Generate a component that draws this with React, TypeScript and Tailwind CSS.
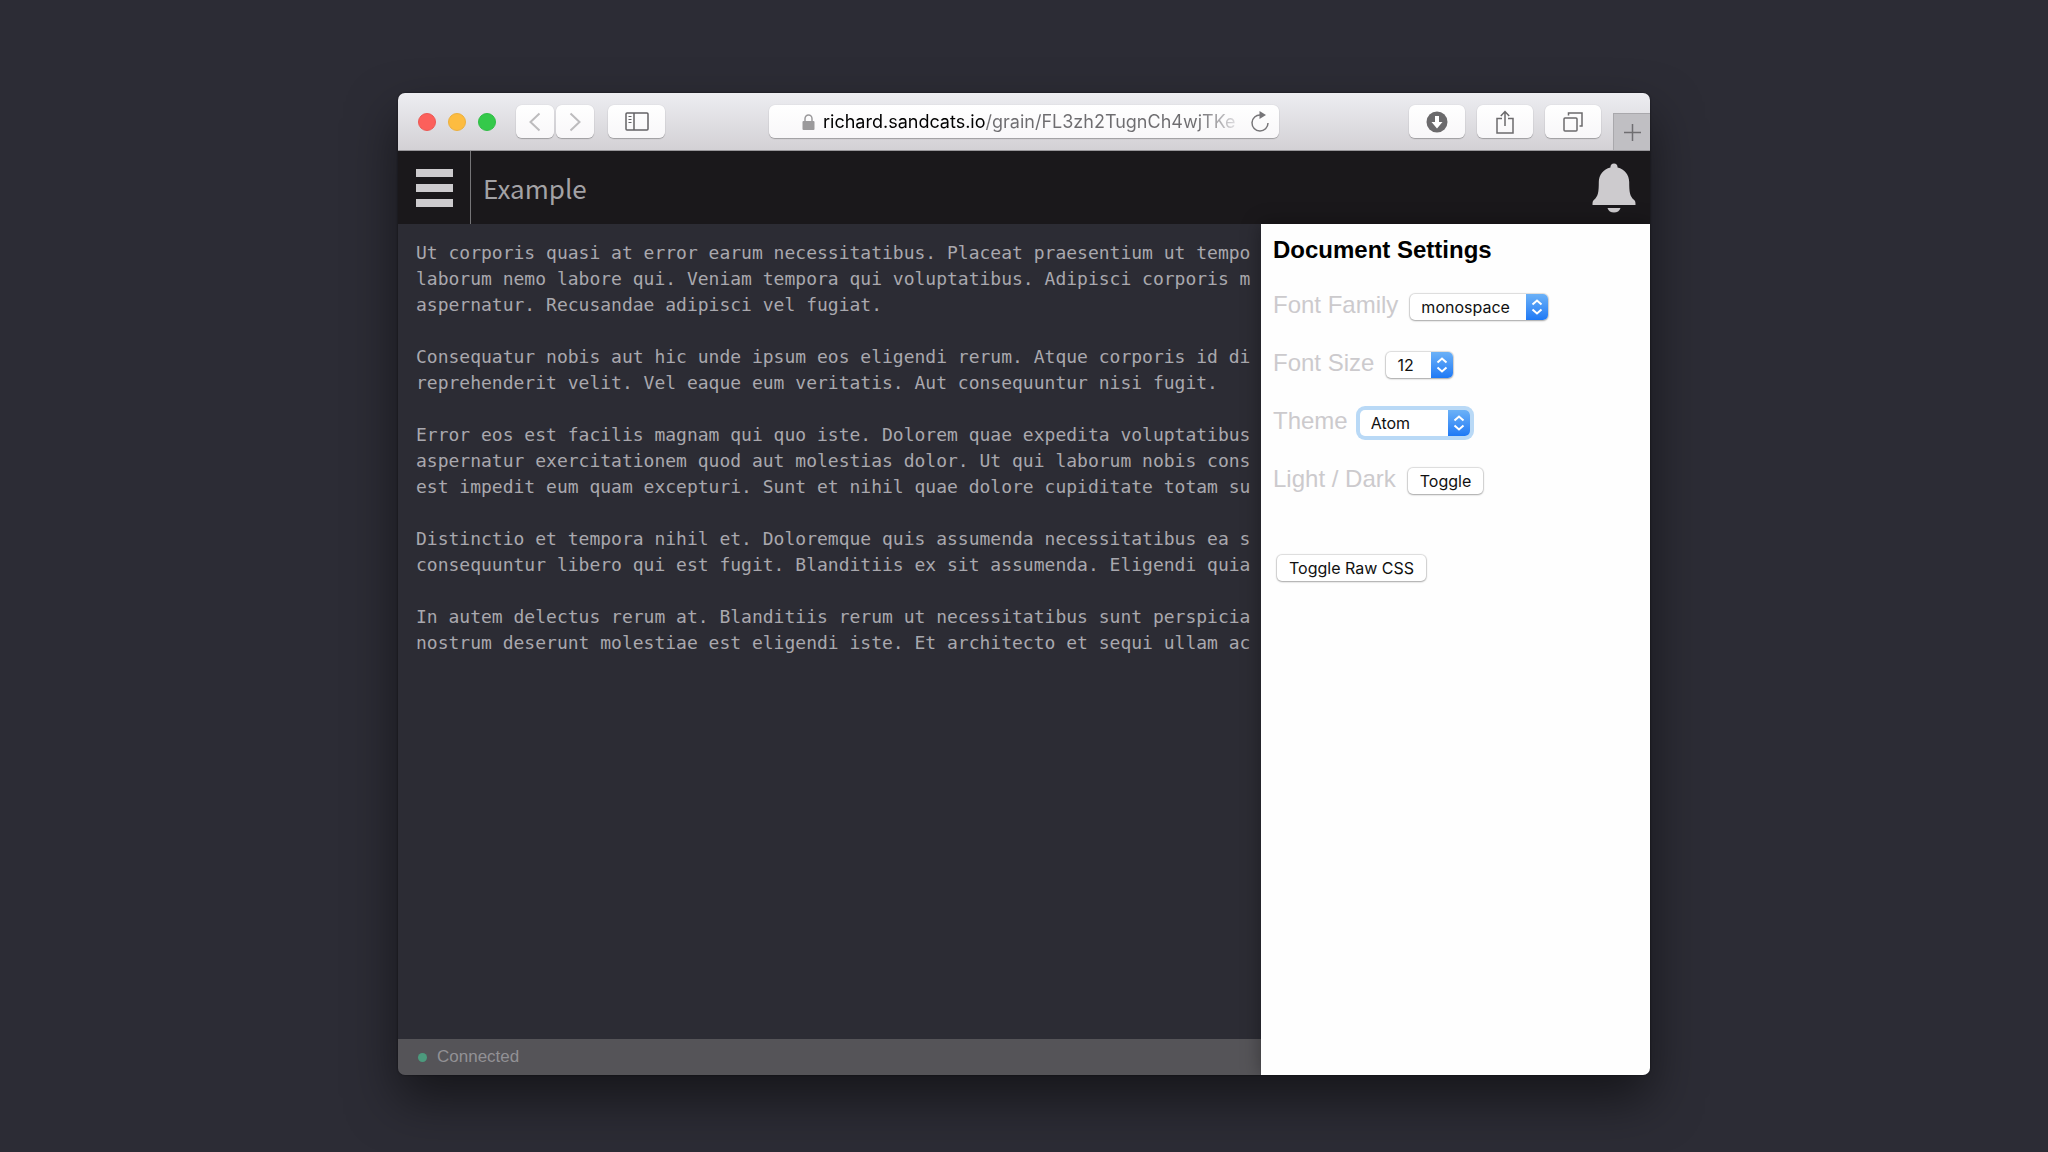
import { useState } from "react";
import type { ReactNode } from "react";

const DOCUMENT_TEXT = `Ut corporis quasi at error earum necessitatibus. Placeat praesentium ut tempo
laborum nemo labore qui. Veniam tempora qui voluptatibus. Adipisci corporis m
aspernatur. Recusandae adipisci vel fugiat.

Consequatur nobis aut hic unde ipsum eos eligendi rerum. Atque corporis id di
reprehenderit velit. Vel eaque eum veritatis. Aut consequuntur nisi fugit.

Error eos est facilis magnam qui quo iste. Dolorem quae expedita voluptatibus
aspernatur exercitationem quod aut molestias dolor. Ut qui laborum nobis cons
est impedit eum quam excepturi. Sunt et nihil quae dolore cupiditate totam su

Distinctio et tempora nihil et. Doloremque quis assumenda necessitatibus ea s
consequuntur libero qui est fugit. Blanditiis ex sit assumenda. Eligendi quia

In autem delectus rerum at. Blanditiis rerum ut necessitatibus sunt perspicia
nostrum deserunt molestiae est eligendi iste. Et architecto et sequi ullam ac`;

const toolButton =
  "flex h-[33px] items-center justify-center rounded-[6px] bg-linear-to-b from-white to-[#f8f7f9] shadow-[0_0_1px_rgba(0,0,0,0.2),0_1px_1px_rgba(0,0,0,0.25)]";

const controlBorder = "shadow-[0_0_1px_1px_rgba(0,0,0,0.13),0_1px_2px_rgba(0,0,0,0.25)]";

const pushButton = `h-[26px] rounded-[5px] bg-white px-3 font-['Inter',sans-serif] text-base leading-[26px] text-[#111111] ${controlBorder}`;

function Toolbar() {
  return (
    <div className="grid h-[58px] grid-cols-[371px_minmax(0,1fr)_371px] border-b border-[#98969a] bg-linear-to-b from-[#ededf1] to-[#d3d1d5]">
      <div className="flex items-center pl-5">
        <div className="mr-5 flex gap-3">
          <button aria-label="Close" className="size-[18px] rounded-full border border-[#ec5853] bg-[#fc605b]" />
          <button aria-label="Minimize" className="size-[18px] rounded-full border border-[#ecb03d] bg-[#fdbc40]" />
          <button aria-label="Zoom" className="size-[18px] rounded-full border border-[#2fbd45] bg-[#34c94a]" />
        </div>
        <div className="mr-[14px] flex gap-[2px]">
          <button aria-label="Back" className={`${toolButton} w-[38px]`}>
            <svg width="12" height="20" viewBox="0 0 12 20" fill="none" stroke="#bdbcbe" strokeWidth="2">
              <path d="M10.5 1.5 1.5 10l9 8.5" />
            </svg>
          </button>
          <button aria-label="Forward" className={`${toolButton} w-[38px]`}>
            <svg width="12" height="20" viewBox="0 0 12 20" fill="none" stroke="#bdbcbe" strokeWidth="2">
              <path d="m1.5 1.5 9 8.5-9 8.5" />
            </svg>
          </button>
        </div>
        <button aria-label="Show sidebar" className={`${toolButton} w-[57px]`}>
          <svg width="24" height="19" viewBox="0 0 24 19" fill="none" stroke="#636265" strokeWidth="1.5">
            <rect x="1" y="1" width="22" height="17" rx="1" />
            <path d="M9 1v17" />
            <path d="M3.5 4.5h3M3.5 7.5h3M3.5 10.5h3" strokeWidth="1.2" />
          </svg>
        </button>
      </div>

      <div className="flex items-center">
        <div className={`${toolButton} w-full justify-start pr-[10px] pl-[33px]`}>
          <svg className="mr-2 shrink-0" width="13" height="16" viewBox="0 0 13 16">
            <path d="M3 8V4.8a3.5 3.8 0 0 1 7 0V8" fill="none" stroke="#9b9a9c" strokeWidth="1.5" />
            <rect x="0.5" y="7" width="12" height="9" rx="1" fill="#9b9a9c" />
          </svg>
          <input
            type="text"
            aria-label="Address"
            defaultValue="richard.sandcats.io/grain/FL3zh2TugnCh4wjTKe"
            className="min-w-0 flex-1 bg-[linear-gradient(to_right,#000_163px,#6e6d70_163px,#6e6d70_375px,#e8e7ea_416px)] bg-clip-text font-['Inter',sans-serif] text-[18px] leading-6 text-transparent outline-none"
          />
          <button aria-label="Reload" className="ml-[13px] shrink-0">
            <svg width="18" height="21" viewBox="0 0 18 21" fill="none">
              <path d="M9.5 4A8 8 0 1 0 17 12" stroke="#767578" strokeWidth="1.5" />
              <path d="m8.5 0 6.5 4-6.5 4z" fill="#767578" />
            </svg>
          </button>
        </div>
      </div>

      <div className="flex items-center justify-end">
        <div className="mr-3 flex gap-3">
          <button aria-label="Downloads" className={`${toolButton} w-[56px]`}>
            <svg width="22" height="22" viewBox="0 0 22 22">
              <circle cx="11" cy="11" r="10.5" fill="#6b6a6c" />
              <path d="M9 5h4v6h3.5L11 17.5 5.5 11H9z" fill="#fff" />
            </svg>
          </button>
          <button aria-label="Share" className={`${toolButton} w-[56px]`}>
            <svg width="18" height="24" viewBox="0 0 18 24" fill="none" stroke="#6b6a6c" strokeWidth="1.5">
              <path d="M6 8.5H1V23h16V8.5h-5M9 16V1.5M4.8 6 9 1.5 13.2 6" />
            </svg>
          </button>
          <button aria-label="Show all tabs" className={`${toolButton} w-[56px]`}>
            <svg width="20" height="20" viewBox="0 0 20 20" fill="none" stroke="#6b6a6c" strokeWidth="1.5">
              <rect x="1" y="6" width="13" height="13" rx="1" />
              <path d="M5.5 3.5V1H19v13h-2.5" />
            </svg>
          </button>
        </div>
        <button
          aria-label="New tab"
          className="flex h-[37px] w-[37px] items-center justify-center self-end border-t border-l border-[#a9a8ac] bg-[#c0bfc3]"
        >
          <svg width="17" height="17" viewBox="0 0 17 17" stroke="#6f6e71" strokeWidth="1.5">
            <path d="M8.5 0v17M0 8.5h17" />
          </svg>
        </button>
      </div>
    </div>
  );
}

function AppHeader() {
  return (
    <header className="flex h-[73px] bg-[#1a181b]">
      <button aria-label="Menu" className="flex w-[73px] flex-col justify-center gap-[7px] border-r border-[#767578] pl-[18px]">
        <span className="h-2 w-[37px] bg-[#cdcbce]" />
        <span className="h-2 w-[37px] bg-[#cdcbce]" />
        <span className="h-2 w-[37px] bg-[#cdcbce]" />
      </button>
      <h1 className="flex flex-1 items-center pl-3 font-['Noto_Sans_CJK_SC',sans-serif] text-[26px] leading-9 text-[#a3a2a5]">
        Example
      </h1>
      <button aria-label="Notifications" className="mr-[14px]">
        <svg width="44" height="50" viewBox="0 0 44 50" fill="#cdcbce">
          <path d="M22 0.5c2.2 0 3.6 1.6 3.6 4 7 1.8 11.6 7.5 11.6 14.5 0 10 .6 14.5 5 18 1.3 1.2 1.3 2.7 1.3 5H.5c0-2.3 0-3.8 1.3-5 4.4-3.5 5-8 5-18 0-7 4.6-12.7 11.6-14.5 0-2.4 1.4-4 3.6-4z" />
          <path d="M15.5 45h13c-.8 3-3.4 4.5-6.5 4.5S16.3 48 15.5 45z" />
        </svg>
      </button>
    </header>
  );
}

type SelectProps = {
  id: string;
  options: string[];
  className: string;
};

function Select({ id, options, className }: SelectProps) {
  return (
    <div className={`relative h-[26px] rounded-[5px] bg-white ${className}`}>
      <select
        id={id}
        className="h-full w-full appearance-none rounded-[5px] pr-6 pl-[11px] font-['Inter',sans-serif] text-base leading-[26px] text-[#111111] outline-none"
      >
        {options.map((option) => (
          <option key={option}>{option}</option>
        ))}
      </select>
      <span className="pointer-events-none absolute inset-y-0 right-0 flex w-[22px] items-center justify-center rounded-r-[5px] bg-linear-to-b from-[#6bb1f7] to-[#1e79f5]">
        <svg width="12" height="16" viewBox="0 0 12 16" fill="none" stroke="#fff" strokeWidth="2">
          <path d="M1.5 5.5 6 1.5l4.5 4M1.5 10.5l4.5 4 4.5-4" />
        </svg>
      </span>
    </div>
  );
}

function Row({ label, htmlFor, children }: { label: string; htmlFor: string; children: ReactNode }) {
  return (
    <div className="flex h-[58px] items-center gap-3">
      <label htmlFor={htmlFor} className="pb-1 text-2xl text-[#cccacd]">
        {label}
      </label>
      {children}
    </div>
  );
}

function SettingsPanel() {
  const [light, setLight] = useState(false);
  const [rawCss, setRawCss] = useState(false);

  return (
    <aside className="z-10 w-[389px] shrink-0 bg-[#fefefe] px-3 pt-[10px] font-['Liberation_Sans',sans-serif] shadow-[0_0_18px_rgba(0,0,0,0.35)]">
      <h2 className="text-2xl font-bold text-black">Document Settings</h2>
      <div className="mt-3 flex flex-col">
        <Row label="Font Family" htmlFor="font-family">
          <Select id="font-family" options={["monospace", "serif", "sans-serif"]} className={`w-[138px] ${controlBorder}`} />
        </Row>
        <Row label="Font Size" htmlFor="font-size">
          <Select id="font-size" options={["12", "14", "16"]} className={`w-[67px] ${controlBorder}`} />
        </Row>
        <Row label="Theme" htmlFor="theme">
          <Select id="theme" options={["Atom", "Default"]} className="w-[110px] shadow-[0_0_0_4px_#b9d9f6]" />
        </Row>
        <Row label="Light / Dark" htmlFor="light-dark">
          <button id="light-dark" aria-pressed={light} onClick={() => setLight(!light)} className={pushButton}>
            Toggle
          </button>
        </Row>
      </div>
      <button aria-pressed={rawCss} onClick={() => setRawCss(!rawCss)} className={`${pushButton} mt-[45px] ml-1`}>
        Toggle Raw CSS
      </button>
    </aside>
  );
}

export default function App() {
  return (
    <main className="flex min-h-screen flex-col bg-[#2c2c35] pt-[93px] pb-[77px]">
      <div className="mx-auto flex w-full max-w-[1252px] flex-1 flex-col rounded-[7px] shadow-[0_0_2px_rgba(0,0,0,0.6),0_24px_50px_rgba(0,0,0,0.5)]">
        <div className="flex flex-1 flex-col overflow-hidden rounded-[7px]">
          <Toolbar />
          <AppHeader />
          <div className="flex flex-1">
            <div className="flex min-w-0 flex-1 flex-col">
              <textarea
                aria-label="Document"
                wrap="off"
                spellCheck={false}
                defaultValue={DOCUMENT_TEXT}
                className="flex-1 resize-none overflow-hidden bg-[#2c2c34] pt-4 pl-[18px] font-['DejaVu_Sans_Mono',monospace] text-[18px] leading-[26px] text-[#a9a8ae] outline-none"
              />
              <footer className="flex h-9 items-center gap-[10px] bg-[#555458] pl-5 font-['Liberation_Sans',sans-serif] text-[17px] text-[#929195]">
                <span className="size-[9px] rounded-full bg-[#4c9a7d]" />
                Connected
              </footer>
            </div>
            <SettingsPanel />
          </div>
        </div>
      </div>
    </main>
  );
}
